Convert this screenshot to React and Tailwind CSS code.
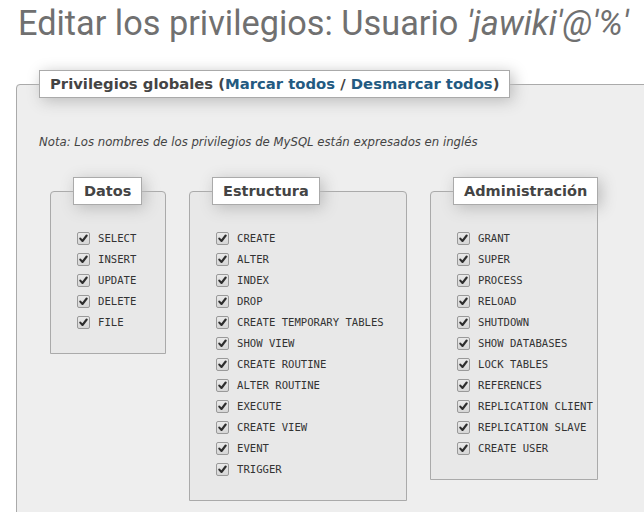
const DATOS = ['SELECT', 'INSERT', 'UPDATE', 'DELETE', 'FILE']

const ESTRUCTURA = [
  'CREATE', 'ALTER', 'INDEX', 'DROP', 'CREATE TEMPORARY TABLES', 'SHOW VIEW',
  'CREATE ROUTINE', 'ALTER ROUTINE', 'EXECUTE', 'CREATE VIEW', 'EVENT', 'TRIGGER',
]

const ADMIN = [
  'GRANT', 'SUPER', 'PROCESS', 'RELOAD', 'SHUTDOWN', 'SHOW DATABASES', 'LOCK TABLES',
  'REFERENCES', 'REPLICATION CLIENT', 'REPLICATION SLAVE', 'CREATE USER',
]

function Check() {
  return (
    <span className="w-[13px] h-[13px] shrink-0 rounded-[2px] border border-[#999] bg-gradient-to-b from-[#eaeaea] to-[#d6d6d6] flex items-center justify-center">
      <svg width="9" height="9" viewBox="0 0 9 9">
        <path d="M1.3 4.6 L3.5 7 L7.7 1.5" fill="none" stroke="#2e2e2e" strokeWidth="2.1" strokeLinecap="round" strokeLinejoin="round" />
      </svg>
    </span>
  )
}

function Group({ title, items, width }) {
  return (
    <fieldset className={`${width} min-w-0 shrink-0 border border-[#aaa] rounded-t-[4px] bg-[#e8e8e8] pl-[26px] pr-2 pt-[23px] pb-[20px]`}>
      <legend className="ml-[-4px] px-[10px] py-[5px] bg-white border border-[#aaa] shadow-[3px_3px_15px_#bbb] text-[14.5px] leading-[16px] font-bold text-[#444] whitespace-nowrap">
        {title}
      </legend>
      {items.map(name => (
        <label key={name} className="flex items-center gap-[8px] h-[21px]">
          <Check />
          <span className="font-['DejaVu_Sans_Mono',monospace] text-[10.6px] text-[#333] whitespace-nowrap">{name}</span>
        </label>
      ))}
    </fieldset>
  )
}

export default function App() {
  return (
    <div className="w-[644px] h-[512px] overflow-hidden bg-white font-['DejaVu_Sans',sans-serif]">
      <h2 className="pt-[1px] pl-[18px] h-[46px] text-[34.3px] leading-[44px] font-['Roboto',sans-serif] font-normal text-[#707070] whitespace-nowrap">
        Editar los privilegios: Usuario <i>'jawiki'@'%'</i>
      </h2>

      <fieldset className="mt-[24px] ml-[16px] w-[720px] border border-[#aaa] rounded-tl-[4px] bg-[#eee] px-[22px] pt-[36px] pb-6">
        <legend className="px-[10px] py-[5px] bg-white border border-[#aaa] shadow-[3px_3px_15px_#bbb] text-[14.8px] leading-[16px] font-bold text-[#444] whitespace-nowrap">
          Privilegios globales (<a className="text-[#235a81]">Marcar todos</a> / <a className="text-[#235a81]">Desmarcar todos</a>)
        </legend>

        <p className="text-[11.7px] leading-[16px] italic text-[#444] whitespace-nowrap">
          Nota: Los nombres de los privilegios de MySQL están expresados en inglés
        </p>

        <div className="mt-[27px] ml-[11px] flex items-start gap-[23px]">
          <Group title="Datos" items={DATOS} width="w-[116px]" />
          <Group title="Estructura" items={ESTRUCTURA} width="w-[218px]" />
          <Group title="Administración" items={ADMIN} width="w-[168px]" />
        </div>
      </fieldset>
    </div>
  )
}
